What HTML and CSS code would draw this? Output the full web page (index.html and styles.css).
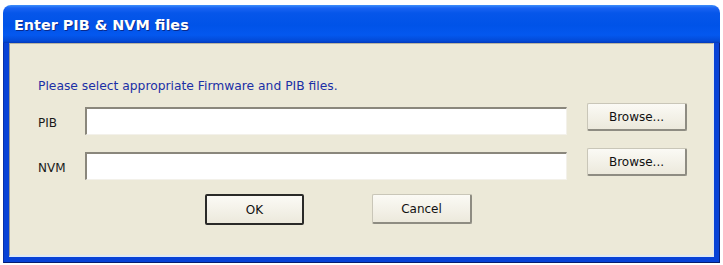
FILE: index.html
```html
<!DOCTYPE html>
<html>
<head>
<meta charset="utf-8">
<link rel="stylesheet" href="styles.css">
</head>
<body>
<div class="window">
  <div class="titlebar"><span class="title">Enter PIB &amp; NVM files</span></div>
  <div class="frame">
    <div class="client">
      <p class="msg">Please select appropriate Firmware and PIB files.</p>
      <div class="row row-pib">
        <span class="label">PIB</span>
        <div class="input"></div>
        <button class="btn browse">Browse...</button>
      </div>
      <div class="row row-nvm">
        <span class="label">NVM</span>
        <div class="input"></div>
        <button class="btn browse">Browse...</button>
      </div>
      <div class="actions">
        <button class="btn default">OK</button>
        <button class="btn">Cancel</button>
      </div>
    </div>
  </div>
</div>
</body>
</html>
```

FILE: styles.css
```css
html, body {
  margin: 0;
  padding: 0;
  background: #ffffff;
}
body {
  font-family: "DejaVu Sans", Verdana, sans-serif;
}
.window {
  margin: 5px 0 0 3px;
  width: 717px;
  height: 258px;
  display: flex;
  flex-direction: column;
}
.titlebar {
  height: 38px;
  flex: none;
  border-radius: 8px 8px 0 0;
  background: linear-gradient(to bottom, #3d8ffb 0px, #1a63f2 3px, #0656ea 8px, #0053e8 20px, #0458ef 30px, #0349d6 36px, #0338b8 38px);
  display: flex;
  align-items: center;
  padding-left: 11px;
  box-sizing: border-box;
}
.title {
  color: #ffffff;
  font-family: "DejaVu Sans", sans-serif;
  font-weight: bold;
  font-size: 14.4px;
  text-shadow: 1px 1px 0 #0a2a8a;
  margin-top: 2px;
}
.frame {
  flex: 1;
  background: #0842d6;
  padding: 0 5px 5px 5px;
  display: flex;
  border-left: 1px solid #0831a8;
  border-right: 1px solid #07207a;
  border-bottom: 1px solid #061d6e;
}
.client {
  flex: 1;
  background: #ece9d8;
  border-top: 1px solid #b9b5a3;
  border-left: 1px solid #9c9a90;
  border-bottom: 2px solid #dde9f5;
  border-right: 1px solid #dfe7ef;
  padding: 0 0 0 28px;
}
.msg {
  margin: 34px 0 0 0;
  color: #1b2fa6;
  font-size: 12.3px;
  line-height: 16px;
}
.row {
  display: grid;
  grid-template-columns: 47px 482px 100px;
  align-items: center;
  font-size: 12px;
  color: #1a1a1a;
}
.row-pib {
  margin-top: 13px;
}
.row-nvm {
  margin-top: 17px;
}
.label {
  padding-top: 4px;
}
.input {
  height: 28px;
  box-sizing: border-box;
  background: #ffffff;
  border-top: 2px solid #8a877c;
  border-left: 2px solid #8a877c;
  border-bottom: 1px solid #f3f1ea;
  border-right: 1px solid #f3f1ea;
}
.row .browse {
  margin: -8px 0 0 20px;
}
.btn {
  font-family: "DejaVu Sans", sans-serif;
  font-size: 12px;
  color: #111;
  width: 100px;
  height: 28px;
  background: linear-gradient(to bottom, #fbfaf5, #ece9dc);
  border: 1px solid #c9c6b8;
  border-right: 2px solid #8e8c82;
  border-bottom: 2px solid #8e8c82;
  border-radius: 2px;
  padding: 0;
}
.actions {
  display: flex;
  gap: 68px;
  margin: 14px 0 0 167px;
}
.btn.default {
  border: 2px solid #2a2a28;
  width: 99px;
  height: 31px;
}
.actions .btn:not(.default) {
  height: 30px;
}
```
